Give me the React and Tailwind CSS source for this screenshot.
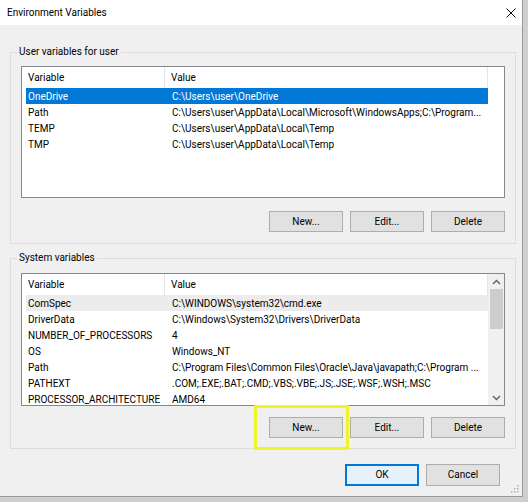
const userVars = [
  ["OneDrive", String.raw`C:\Users\user\OneDrive`],
  ["Path", String.raw`C:\Users\user\AppData\Local\Microsoft\WindowsApps;C:\Program...`],
  ["TEMP", String.raw`C:\Users\user\AppData\Local\Temp`],
  ["TMP", String.raw`C:\Users\user\AppData\Local\Temp`],
];

const systemVars = [
  ["ComSpec", String.raw`C:\WINDOWS\system32\cmd.exe`],
  ["DriverData", String.raw`C:\Windows\System32\Drivers\DriverData`],
  ["NUMBER_OF_PROCESSORS", "4"],
  ["OS", "Windows_NT"],
  ["Path", String.raw`C:\Program Files\Common Files\Oracle\Java\javapath;C:\Program ...`],
  ["PATHEXT", ".COM;.EXE;.BAT;.CMD;.VBS;.VBE;.JS;.JSE;.WSF;.WSH;.MSC"],
  ["PROCESSOR_ARCHITECTURE", "AMD64"],
];

function WinButton({ children }) {
  return (
    <button className="w-[74px] h-[21px] bg-[#e1e1e1] border border-[#adadad] text-[10px] leading-none text-black">
      {children}
    </button>
  );
}

function Header() {
  return (
    <div className="flex h-[21px] items-center text-[10px]">
      <div className="w-[143px] h-full flex items-center pl-[6px] border-r border-[#e5e5e5]">Variable</div>
      <div className="w-[323px] h-full flex items-center pl-[6px] border-r border-[#e5e5e5]">Value</div>
    </div>
  );
}

function Row({ name, value, variant }) {
  const cls =
    variant === "selected"
      ? "bg-[#0078d7] text-white"
      : variant === "soft"
      ? "bg-[#ececec] text-black"
      : "text-black";
  return (
    <div className={`ml-[4px] w-[462px] h-[16px] flex items-center text-[10px] whitespace-nowrap overflow-hidden ${cls}`}>
      <div className="w-[139px] pl-[2px] overflow-hidden">{name}</div>
      <div className="flex-1 pl-[7px] overflow-hidden">{value}</div>
    </div>
  );
}

function Chevron({ up }) {
  return (
    <svg width="9" height="6" viewBox="0 0 9 6">
      <path
        d={up ? "M1 5 L4.5 1.5 L8 5" : "M1 1 L4.5 4.5 L8 1"}
        fill="none"
        stroke="#606060"
        strokeWidth="1.4"
      />
    </svg>
  );
}

function GroupBox({ label, children, className }) {
  return (
    <div className={`relative w-[506px] border border-[#dcdcdc] ${className}`}>
      <span className="absolute left-[6px] -top-[8px] px-[2px] bg-[#f0f0f0] text-[10px] leading-[14px]">
        {label}
      </span>
      {children}
    </div>
  );
}

export default function App() {
  return (
    <div className="w-[528px] h-[502px] bg-[#cfcfcf] font-['Roboto',sans-serif] text-black overflow-hidden">
      <div className="relative w-[523px] h-[497px] bg-[#f0f0f0] border-r border-b border-[#9a9a9a] flex flex-col">
        {/* title bar */}
        <div className="h-[25px] bg-white flex items-center justify-between pl-[7px] pr-[6px] shrink-0">
          <span className="text-[10px]">Environment Variables</span>
          <svg width="10" height="10" viewBox="0 0 10 10">
            <path d="M0.5 0.5 L9.5 9.5 M9.5 0.5 L0.5 9.5" stroke="#111" strokeWidth="1" />
          </svg>
        </div>

        <div className="pl-[10px] pt-[27px]">
          <GroupBox label="User variables for user" className="pt-[13px] pl-[10px] pb-[11px]">
            <div className="w-[484px] h-[132px] bg-white border border-[#828790]">
              <Header />
              {userVars.map(([n, v], i) => (
                <Row key={n} name={n} value={v} variant={i === 0 ? "selected" : ""} />
              ))}
            </div>
            <div className="flex justify-end gap-[7px] mt-[13px] pr-[10px]">
              <WinButton>New...</WinButton>
              <WinButton>Edit...</WinButton>
              <WinButton>Delete</WinButton>
            </div>
          </GroupBox>

          <GroupBox label="System variables" className="mt-[14px] pt-[14px] pl-[10px] pb-[10px]">
            <div className="w-[484px] h-[133px] bg-white border border-[#828790] flex overflow-hidden">
              <div className="flex-1">
                <Header />
                {systemVars.map(([n, v], i) => (
                  <Row key={n} name={n} value={v} variant={i === 0 ? "soft" : ""} />
                ))}
              </div>
              <div className="w-[16px] bg-[#f0f0f0] flex flex-col items-center">
                <div className="h-[15px] flex items-center justify-center">
                  <Chevron up />
                </div>
                <div className="w-[13px] h-[40px] bg-[#cdcdcd]" />
                <div className="flex-1" />
                <div className="h-[15px] flex items-center justify-center">
                  <Chevron />
                </div>
              </div>
            </div>
            <div className="flex justify-end gap-[7px] mt-[11px] pr-[10px]">
              <WinButton>New...</WinButton>
              <WinButton>Edit...</WinButton>
              <WinButton>Delete</WinButton>
            </div>
          </GroupBox>

          <div className="w-[490px] flex justify-end gap-[7px] mt-[15px]">
            <button className="w-[74px] h-[22px] bg-[#e5f1fb] border-2 border-[#0078d7] text-[10px] leading-none">
              OK
            </button>
            <button className="w-[74px] h-[22px] bg-[#e1e1e1] border border-[#adadad] text-[10px] leading-none">
              Cancel
            </button>
          </div>
        </div>

        {/* resize grip */}
        <svg width="8" height="8" viewBox="0 0 8 8" className="absolute right-[3px] bottom-[3px]">
          <rect x="6" y="0" width="1.5" height="1.5" fill="#b0b0b0" />
          <rect x="3" y="3" width="1.5" height="1.5" fill="#b0b0b0" />
          <rect x="6" y="3" width="1.5" height="1.5" fill="#b0b0b0" />
          <rect x="0" y="6" width="1.5" height="1.5" fill="#b0b0b0" />
          <rect x="3" y="6" width="1.5" height="1.5" fill="#b0b0b0" />
          <rect x="6" y="6" width="1.5" height="1.5" fill="#b0b0b0" />
        </svg>

        {/* yellow highlight */}
        <div className="absolute left-[254px] top-[405px] w-[95px] h-[45px] border-[3px] border-[#eef527] pointer-events-none" />
      </div>
    </div>
  );
}
